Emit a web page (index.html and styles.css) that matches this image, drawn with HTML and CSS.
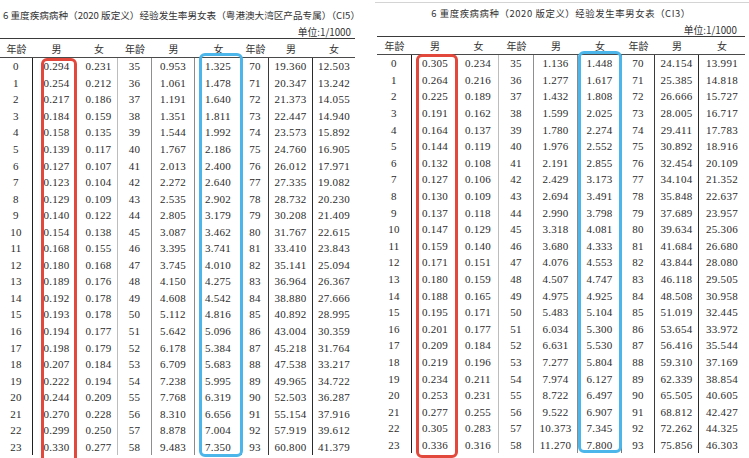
FILE: index.html
```html
<!DOCTYPE html>
<html lang="zh-CN">
<head>
<meta charset="utf-8">
<title>重度疾病病种经验发生率男女表</title>
<link rel="stylesheet" href="styles.css">
</head>
<body>
<div class="page">
  <section class="panel panel-left">
    <div class="title">6 重度疾病病种（2020 版定义）经验发生率男女表（粤港澳大湾区产品专属）（CI5）</div>
    <div class="unit">单位:1/1000</div>
    <table class="rates rates-ci5">
      <colgroup><col style="width:33px"><col style="width:47px"><col style="width:38px"><col style="width:34px"><col style="width:43px"><col style="width:47px"><col style="width:27px"><col style="width:44px"><col style="width:42px"></colgroup>
      <thead><tr><th>年龄</th><th>男</th><th>女</th><th>年龄</th><th>男</th><th>女</th><th>年龄</th><th>男</th><th>女</th></tr></thead>
      <tbody>
        <tr><td>0</td><td>0.294</td><td>0.231</td><td>35</td><td>0.953</td><td>1.325</td><td>70</td><td>19.360</td><td>12.503</td></tr>
        <tr><td>1</td><td>0.254</td><td>0.212</td><td>36</td><td>1.061</td><td>1.478</td><td>71</td><td>20.347</td><td>13.242</td></tr>
        <tr><td>2</td><td>0.217</td><td>0.186</td><td>37</td><td>1.191</td><td>1.640</td><td>72</td><td>21.373</td><td>14.055</td></tr>
        <tr><td>3</td><td>0.184</td><td>0.159</td><td>38</td><td>1.351</td><td>1.811</td><td>73</td><td>22.447</td><td>14.940</td></tr>
        <tr><td>4</td><td>0.158</td><td>0.135</td><td>39</td><td>1.544</td><td>1.992</td><td>74</td><td>23.573</td><td>15.892</td></tr>
        <tr><td>5</td><td>0.139</td><td>0.117</td><td>40</td><td>1.767</td><td>2.186</td><td>75</td><td>24.760</td><td>16.905</td></tr>
        <tr><td>6</td><td>0.127</td><td>0.107</td><td>41</td><td>2.013</td><td>2.400</td><td>76</td><td>26.012</td><td>17.971</td></tr>
        <tr><td>7</td><td>0.123</td><td>0.104</td><td>42</td><td>2.272</td><td>2.640</td><td>77</td><td>27.335</td><td>19.082</td></tr>
        <tr><td>8</td><td>0.129</td><td>0.109</td><td>43</td><td>2.535</td><td>2.902</td><td>78</td><td>28.732</td><td>20.230</td></tr>
        <tr><td>9</td><td>0.140</td><td>0.122</td><td>44</td><td>2.805</td><td>3.179</td><td>79</td><td>30.208</td><td>21.409</td></tr>
        <tr><td>10</td><td>0.154</td><td>0.138</td><td>45</td><td>3.087</td><td>3.462</td><td>80</td><td>31.767</td><td>22.615</td></tr>
        <tr><td>11</td><td>0.168</td><td>0.155</td><td>46</td><td>3.395</td><td>3.741</td><td>81</td><td>33.410</td><td>23.843</td></tr>
        <tr><td>12</td><td>0.180</td><td>0.168</td><td>47</td><td>3.745</td><td>4.010</td><td>82</td><td>35.141</td><td>25.094</td></tr>
        <tr><td>13</td><td>0.189</td><td>0.176</td><td>48</td><td>4.150</td><td>4.275</td><td>83</td><td>36.964</td><td>26.367</td></tr>
        <tr><td>14</td><td>0.192</td><td>0.178</td><td>49</td><td>4.608</td><td>4.542</td><td>84</td><td>38.880</td><td>27.666</td></tr>
        <tr><td>15</td><td>0.193</td><td>0.178</td><td>50</td><td>5.112</td><td>4.816</td><td>85</td><td>40.892</td><td>28.995</td></tr>
        <tr><td>16</td><td>0.194</td><td>0.177</td><td>51</td><td>5.642</td><td>5.096</td><td>86</td><td>43.004</td><td>30.359</td></tr>
        <tr><td>17</td><td>0.198</td><td>0.179</td><td>52</td><td>6.178</td><td>5.384</td><td>87</td><td>45.218</td><td>31.764</td></tr>
        <tr><td>18</td><td>0.207</td><td>0.184</td><td>53</td><td>6.709</td><td>5.683</td><td>88</td><td>47.538</td><td>33.217</td></tr>
        <tr><td>19</td><td>0.222</td><td>0.194</td><td>54</td><td>7.238</td><td>5.995</td><td>89</td><td>49.965</td><td>34.722</td></tr>
        <tr><td>20</td><td>0.244</td><td>0.209</td><td>55</td><td>7.768</td><td>6.319</td><td>90</td><td>52.503</td><td>36.287</td></tr>
        <tr><td>21</td><td>0.270</td><td>0.228</td><td>56</td><td>8.310</td><td>6.656</td><td>91</td><td>55.154</td><td>37.916</td></tr>
        <tr><td>22</td><td>0.299</td><td>0.250</td><td>57</td><td>8.878</td><td>7.004</td><td>92</td><td>57.919</td><td>39.612</td></tr>
        <tr><td>23</td><td>0.330</td><td>0.277</td><td>58</td><td>9.483</td><td>7.350</td><td>93</td><td>60.800</td><td>41.379</td></tr>
      </tbody>
    </table>
    <div class="mark mark-red mark-ci5-male"></div>
    <div class="mark mark-blue mark-ci5-female"></div>
  </section>

  <section class="panel panel-right">
    <div class="topline"></div>
    <div class="title title-ci3">6 重度疾病病种（2020 版定义）经验发生率男女表（CI3）</div>
    <div class="unit unit-ci3">单位:1/1000</div>
    <table class="rates rates-ci3">
      <colgroup><col style="width:35px"><col style="width:46px"><col style="width:41px"><col style="width:35px"><col style="width:44px"><col style="width:44px"><col style="width:33px"><col style="width:44px"><col style="width:46px"></colgroup>
      <thead><tr><th>年龄</th><th>男</th><th>女</th><th>年龄</th><th>男</th><th>女</th><th>年龄</th><th>男</th><th>女</th></tr></thead>
      <tbody>
        <tr><td>0</td><td>0.305</td><td>0.234</td><td>35</td><td>1.136</td><td>1.448</td><td>70</td><td>24.154</td><td>13.991</td></tr>
        <tr><td>1</td><td>0.264</td><td>0.216</td><td>36</td><td>1.277</td><td>1.617</td><td>71</td><td>25.385</td><td>14.818</td></tr>
        <tr><td>2</td><td>0.225</td><td>0.189</td><td>37</td><td>1.432</td><td>1.808</td><td>72</td><td>26.666</td><td>15.727</td></tr>
        <tr><td>3</td><td>0.191</td><td>0.162</td><td>38</td><td>1.599</td><td>2.025</td><td>73</td><td>28.005</td><td>16.717</td></tr>
        <tr><td>4</td><td>0.164</td><td>0.137</td><td>39</td><td>1.780</td><td>2.274</td><td>74</td><td>29.411</td><td>17.783</td></tr>
        <tr><td>5</td><td>0.144</td><td>0.119</td><td>40</td><td>1.976</td><td>2.552</td><td>75</td><td>30.892</td><td>18.916</td></tr>
        <tr><td>6</td><td>0.132</td><td>0.108</td><td>41</td><td>2.191</td><td>2.855</td><td>76</td><td>32.454</td><td>20.109</td></tr>
        <tr><td>7</td><td>0.127</td><td>0.106</td><td>42</td><td>2.429</td><td>3.173</td><td>77</td><td>34.104</td><td>21.352</td></tr>
        <tr><td>8</td><td>0.130</td><td>0.109</td><td>43</td><td>2.694</td><td>3.491</td><td>78</td><td>35.848</td><td>22.637</td></tr>
        <tr><td>9</td><td>0.137</td><td>0.118</td><td>44</td><td>2.990</td><td>3.798</td><td>79</td><td>37.689</td><td>23.957</td></tr>
        <tr><td>10</td><td>0.147</td><td>0.129</td><td>45</td><td>3.318</td><td>4.081</td><td>80</td><td>39.634</td><td>25.306</td></tr>
        <tr><td>11</td><td>0.159</td><td>0.140</td><td>46</td><td>3.680</td><td>4.333</td><td>81</td><td>41.684</td><td>26.680</td></tr>
        <tr><td>12</td><td>0.171</td><td>0.151</td><td>47</td><td>4.076</td><td>4.553</td><td>82</td><td>43.844</td><td>28.080</td></tr>
        <tr><td>13</td><td>0.180</td><td>0.159</td><td>48</td><td>4.507</td><td>4.747</td><td>83</td><td>46.118</td><td>29.505</td></tr>
        <tr><td>14</td><td>0.188</td><td>0.165</td><td>49</td><td>4.975</td><td>4.925</td><td>84</td><td>48.508</td><td>30.958</td></tr>
        <tr><td>15</td><td>0.195</td><td>0.171</td><td>50</td><td>5.483</td><td>5.104</td><td>85</td><td>51.019</td><td>32.445</td></tr>
        <tr><td>16</td><td>0.201</td><td>0.177</td><td>51</td><td>6.034</td><td>5.300</td><td>86</td><td>53.654</td><td>33.972</td></tr>
        <tr><td>17</td><td>0.209</td><td>0.184</td><td>52</td><td>6.631</td><td>5.530</td><td>87</td><td>56.416</td><td>35.544</td></tr>
        <tr><td>18</td><td>0.219</td><td>0.196</td><td>53</td><td>7.277</td><td>5.804</td><td>88</td><td>59.310</td><td>37.169</td></tr>
        <tr><td>19</td><td>0.234</td><td>0.211</td><td>54</td><td>7.974</td><td>6.127</td><td>89</td><td>62.339</td><td>38.854</td></tr>
        <tr><td>20</td><td>0.253</td><td>0.231</td><td>55</td><td>8.722</td><td>6.497</td><td>90</td><td>65.505</td><td>40.605</td></tr>
        <tr><td>21</td><td>0.277</td><td>0.255</td><td>56</td><td>9.522</td><td>6.907</td><td>91</td><td>68.812</td><td>42.427</td></tr>
        <tr><td>22</td><td>0.305</td><td>0.283</td><td>57</td><td>10.373</td><td>7.345</td><td>92</td><td>72.262</td><td>44.325</td></tr>
        <tr><td>23</td><td>0.336</td><td>0.316</td><td>58</td><td>11.270</td><td>7.800</td><td>93</td><td>75.856</td><td>46.303</td></tr>
      </tbody>
    </table>
    <div class="mark mark-red mark-ci3-male"></div>
    <div class="mark mark-blue mark-ci3-female"></div>
  </section>
</div>
</body>
</html>
```
FILE: styles.css
```css
* { box-sizing: border-box; }

html, body {
  margin: 0;
  padding: 0;
  background: #ffffff;
}

body {
  font-family: "Liberation Serif", "Noto Sans CJK SC", serif;
  color: #2b2b2b;
}

.page {
  display: flex;
  width: 749px;
  height: 458px;
  overflow: hidden;
}

.panel {
  position: relative;
  flex: none;
}

.panel-left {
  width: 370px;
}

.panel-right {
  width: 379px;
  padding-top: 2px;
  padding-left: 7px;
}

.topline {
  height: 1px;
  margin-left: -2px;
  background: #d4d4d4;
}

.title {
  font-family: "Noto Sans CJK SC", "Liberation Serif", sans-serif;
  font-size: 9.6px;
  line-height: 18px;
  padding-top: 6px;
  padding-left: 3px;
  white-space: nowrap;
  color: #333;
}

.title-ci3 {
  width: 368px;
  padding-top: 1px;
  padding-left: 0;
  font-size: 9.4px;
  text-align: center;
  letter-spacing: 0.6px;
}

.unit {
  width: 355px;
  margin-top: 2px;
  padding-right: 4px;
  text-align: right;
  font-family: "Noto Sans CJK SC", "Liberation Serif", sans-serif;
  font-size: 9.8px;
  line-height: 12px;
  color: #333;
}

.unit-ci3 {
  width: 368px;
  padding-right: 8px;
}

.rates {
  border-collapse: separate;
  border-spacing: 0;
  table-layout: fixed;
  font-size: 11px;
}

.rates-ci5 { width: 355px; }
.rates-ci3 { width: 368px; }

.rates th {
  font-family: "Noto Sans CJK SC", "Liberation Serif", sans-serif;
  font-weight: 400;
  font-size: 10px;
  height: 20px;
  padding: 0;
  text-align: center;
  color: #333;
  border-top: 1.5px solid #3a3a3a;
  border-bottom: 1px solid #4a4a4a;
}

.rates td {
  height: 16.55px;
  padding: 0;
  text-align: center;
  white-space: nowrap;
  line-height: 12px;
  letter-spacing: 0.3px;
}

.rates-ci3 th { height: 19px; }
.rates-ci3 td { height: 16.6px; }

/* column rules (body only) */
.rates td:nth-child(1) { border-right: 1px solid #1f1f1f; }
.rates td:nth-child(3) { border-right: 1px solid #bdbdbd; }
.rates td:nth-child(4) { border-right: 1px solid #8f8f8f; }
.rates td:nth-child(5) { border-right: 1px solid #8a8a8a; }
.rates td:nth-child(6) { border-right: 1px solid #777777; }
.rates td:nth-child(7) { border-right: 1px solid #3a3a3a; }
.rates td:nth-child(8) { border-right: 1px solid #2a2a2a; }

/* hand-drawn highlight boxes */
.mark {
  position: absolute;
  border-width: 3px;
  border-style: solid;
  border-radius: 6px;
  pointer-events: none;
}

.mark-red { border-color: #e2483b; }
.mark-blue { border-color: #4cb6ea; }

.mark-ci5-male { left: 41px; top: 58px; width: 36px; height: 420px; }
.mark-ci5-female { left: 199px; top: 53px; width: 44px; height: 404px; }
.mark-ci3-male { left: 46px; top: 54px; width: 42px; height: 404px; }
.mark-ci3-female { left: 208px; top: 51px; width: 44px; height: 402px; }
```
